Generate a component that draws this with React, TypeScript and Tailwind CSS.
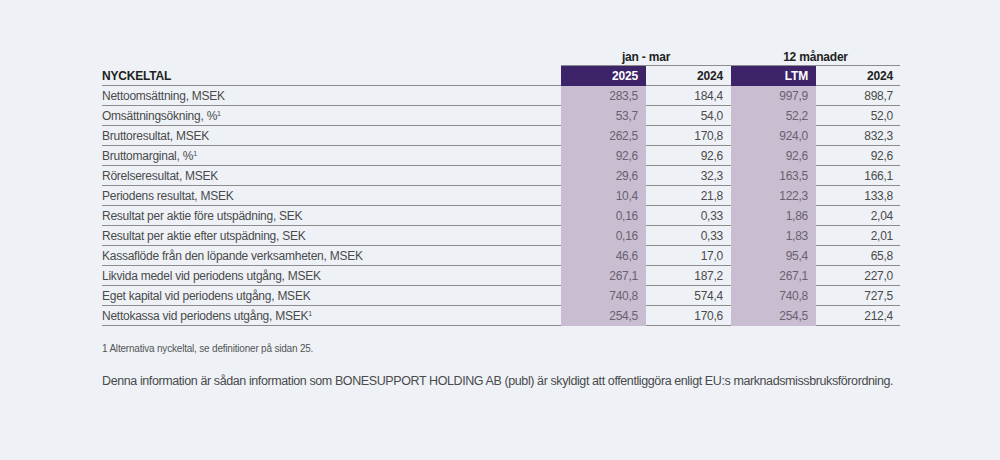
import React from 'react';

const rows: { label: string; sup?: boolean; values: string[] }[] = [
  { label: 'Nettoomsättning, MSEK', values: ['283,5', '184,4', '997,9', '898,7'] },
  { label: 'Omsättningsökning, %', sup: true, values: ['53,7', '54,0', '52,2', '52,0'] },
  { label: 'Bruttoresultat, MSEK', values: ['262,5', '170,8', '924,0', '832,3'] },
  { label: 'Bruttomarginal, %', sup: true, values: ['92,6', '92,6', '92,6', '92,6'] },
  { label: 'Rörelseresultat, MSEK', values: ['29,6', '32,3', '163,5', '166,1'] },
  { label: 'Periodens resultat, MSEK', values: ['10,4', '21,8', '122,3', '133,8'] },
  { label: 'Resultat per aktie före utspädning, SEK', values: ['0,16', '0,33', '1,86', '2,04'] },
  { label: 'Resultat per aktie efter utspädning, SEK', values: ['0,16', '0,33', '1,83', '2,01'] },
  { label: 'Kassaflöde från den löpande verksamheten, MSEK', values: ['46,6', '17,0', '95,4', '65,8'] },
  { label: 'Likvida medel vid periodens utgång, MSEK', values: ['267,1', '187,2', '267,1', '227,0'] },
  { label: 'Eget kapital vid periodens utgång, MSEK', values: ['740,8', '574,4', '740,8', '727,5'] },
  { label: 'Nettokassa vid periodens utgång, MSEK', sup: true, values: ['254,5', '170,6', '254,5', '212,4'] },
];

export default function App() {
  return (
    <div
      className="w-[1000px] h-[460px] bg-[#eef2f7] text-[#444] pt-[49px]"
      style={{ fontFamily: '"Liberation Sans", Arial, sans-serif' }}
    >
      <div className="ml-[102px] w-[798px]">
        {/* Group headers */}
        <div className="grid grid-cols-[459px_170px_169px] h-[16px]">
          <div />
          <div className="text-center text-[12px] font-bold text-[#222] leading-[16px] tracking-[-0.2px]">jan - mar</div>
          <div className="text-center text-[12px] font-bold text-[#222] leading-[16px] tracking-[-0.2px]">12 månader</div>
        </div>
        <div className="grid grid-cols-[459px_339px]">
          <div />
          <div className="h-px bg-[#8c8c8c]" />
        </div>

        {/* Column headers */}
        <div className="grid grid-cols-[459px_85px_85px_85px_84px] h-[20px] border-b border-[#8c8c8c] text-[12px] font-bold leading-[19px] tracking-[-0.2px]">
          <div className="text-[#222] pt-[1px]">NYCKELTAL</div>
          <div className="bg-[#3d2468] text-white text-right pr-[8px] pt-[1px]">2025</div>
          <div className="text-[#222] text-right pr-[8px] pt-[1px]">2024</div>
          <div className="bg-[#3d2468] text-white text-right pr-[8px] pt-[1px]">LTM</div>
          <div className="text-[#222] text-right pr-[7px] pt-[1px]">2024</div>
        </div>

        {/* Data rows */}
        {rows.map((r) => (
          <div
            key={r.label}
            className="grid grid-cols-[459px_85px_85px_85px_84px] h-[20px] border-b border-[#8c8c8c] text-[12px] leading-[20px] tracking-[-0.25px]"
          >
            <div className="text-[#4a4a4a]">
              {r.label}
              {r.sup && <sup className="text-[7px] -top-[4px]">1</sup>}
            </div>
            <div className="bg-[#c9bdd1] text-right pr-[8px] text-[#6a6170]">{r.values[0]}</div>
            <div className="text-right pr-[8px] text-[#4a4a4a]">{r.values[1]}</div>
            <div className="bg-[#c9bdd1] text-right pr-[8px] text-[#6a6170]">{r.values[2]}</div>
            <div className="text-right pr-[7px] text-[#4a4a4a]">{r.values[3]}</div>
          </div>
        ))}

        <p className="mt-[16px] text-[10px] text-[#555] tracking-[-0.2px] leading-[14px]">
          1 Alternativa nyckeltal, se definitioner på sidan 25.
        </p>
        <p className="mt-[16px] text-[12.5px] text-[#4a4a4a] tracking-[-0.4px] whitespace-nowrap leading-[18px]">
          Denna information är sådan information som BONESUPPORT HOLDING AB (publ) är skyldigt att offentliggöra enligt EU:s marknadsmissbruksförordning.
        </p>
      </div>
    </div>
  );
}
